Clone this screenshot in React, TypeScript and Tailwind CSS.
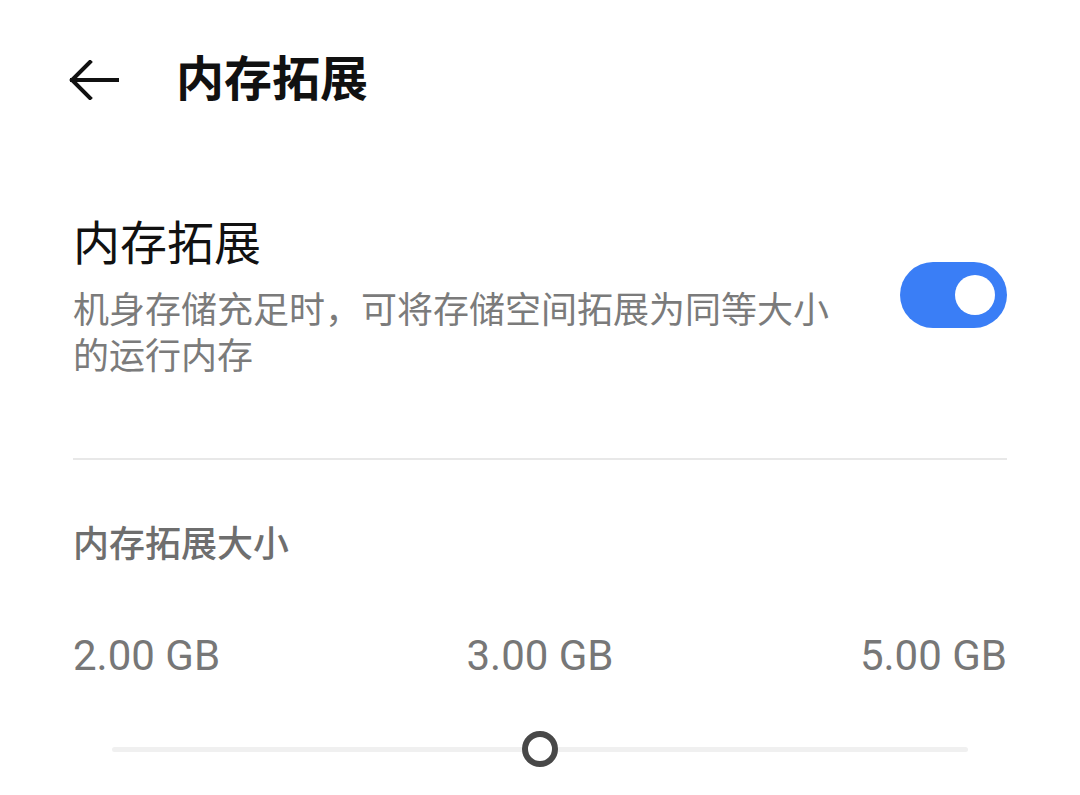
const font = "font-['Roboto','Noto_Sans_CJK_SC',sans-serif]";

function BackArrow() {
  return (
    <svg width="50" height="40" viewBox="0 0 50 40" fill="none">
      <path d="M48 20H3M21 2L3 20L21 38" stroke="#111" strokeWidth="4" strokeLinecap="square" />
    </svg>
  );
}

function Toggle() {
  return (
    <div className="mt-[46px] flex h-[66px] w-[107px] shrink-0 items-center justify-end rounded-full bg-[#3a7ef6] pr-[12px]">
      <span className="h-[40px] w-[40px] rounded-full bg-white" />
    </div>
  );
}

function SizeSlider() {
  return (
    <div className="relative mx-[39px] mt-[51px] flex h-[40px] items-center">
      <div className="h-[5px] w-full rounded-full bg-[#f0f0f0]" />
      <span className="absolute left-1/2 top-1/2 h-[36px] w-[36px] -translate-x-1/2 -translate-y-1/2 rounded-full border-[6px] border-[#484848] bg-white" />
    </div>
  );
}

export default function App() {
  return (
    <div className={`${font} h-[795px] w-[1080px] overflow-hidden bg-white`}>
      <header className="flex h-[160px] items-center pl-[69px]">
        <BackArrow />
        <h1 className="ml-[57px] text-[48px] font-semibold leading-[56px] text-[#111]">内存拓展</h1>
      </header>

      <main className="px-[73px]">
        <section className="mt-[56px] flex items-start justify-between">
          <div className="w-[780px]">
            <h2 className="text-[47px] leading-[56px] text-[#111]">内存拓展</h2>
            <p className="mt-[16px] text-[36px] leading-[46px] text-[#7b7b7b]">
              机身存储充足时，可将存储空间拓展为同等大小的运行内存
            </p>
          </div>
          <Toggle />
        </section>

        <div className="mt-[78px] h-[2px] bg-[#e8e8e8]" />

        <h3 className="mt-[63px] text-[36px] font-medium leading-[44px] text-[#6e6e6e]">内存拓展大小</h3>

        <div className="mt-[67px] flex justify-between text-[42px] leading-[44px] text-[#777]">
          <span>2.00 GB</span>
          <span>3.00 GB</span>
          <span>5.00 GB</span>
        </div>

        <SizeSlider />
      </main>
    </div>
  );
}
